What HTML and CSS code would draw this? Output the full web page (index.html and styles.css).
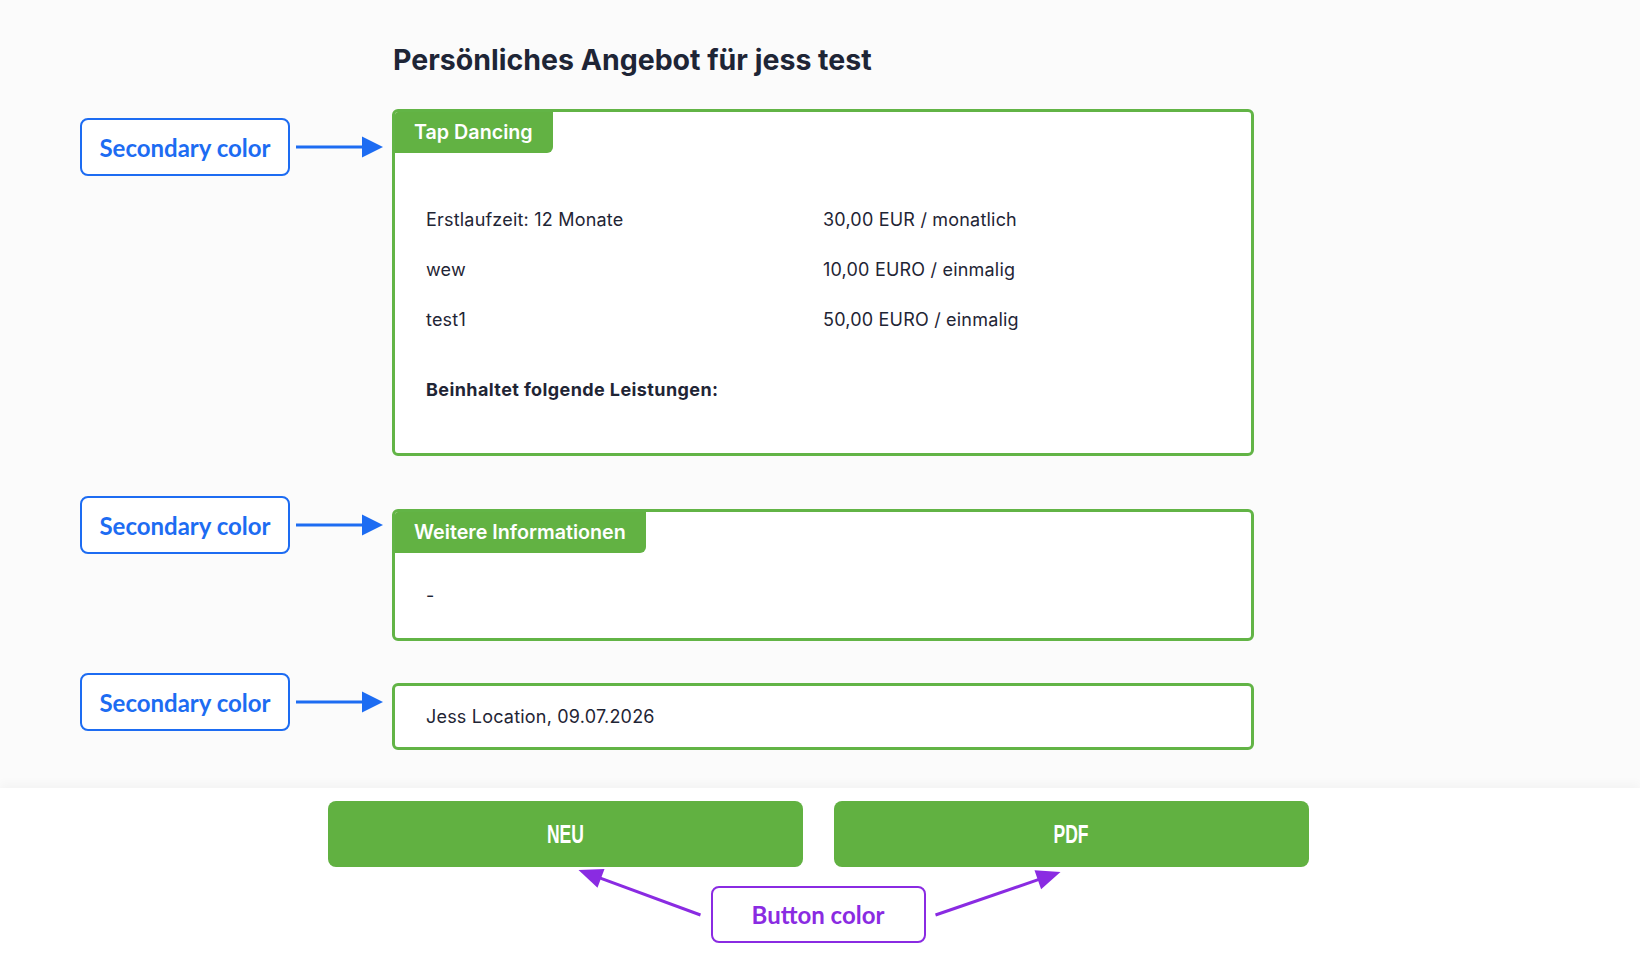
FILE: index.html
```html
<!DOCTYPE html>
<html lang="de">
<head>
    <meta charset="UTF-8">
    <meta name="viewport" content="width=device-width, initial-scale=1.0">
    <title>Persönliches Angebot</title>
    <link rel="stylesheet" href="styles.css">
</head>
<body>
    <main class="page">
        <h1 class="page-title">Persönliches Angebot für jess test</h1>

        <section class="row row-offer">
            <div class="note-col note-col-first">
                <div class="note">Secondary color</div>
                <svg class="arrow" width="87" height="22" viewBox="0 0 87 22">
                    <line x1="0" y1="11" x2="68" y2="11" stroke="#1d6cf2" stroke-width="3"/>
                    <polygon points="66,0.5 87,11 66,21.5" fill="#1d6cf2"/>
                </svg>
            </div>
            <div class="card card-offer">
                <div class="card-tab">Tap Dancing</div>
                <div class="card-body">
                    <div class="price-grid">
                        <span>Erstlaufzeit: 12 Monate</span><span>30,00 EUR / monatlich</span>
                        <span>wew</span><span>10,00 EURO / einmalig</span>
                        <span>test1</span><span>50,00 EURO / einmalig</span>
                    </div>
                    <p class="services">Beinhaltet folgende Leistungen:</p>
                </div>
            </div>
        </section>

        <section class="row row-info">
            <div class="note-col note-col-up">
                <div class="note">Secondary color</div>
                <svg class="arrow" width="87" height="22" viewBox="0 0 87 22">
                    <line x1="0" y1="11" x2="68" y2="11" stroke="#1d6cf2" stroke-width="3"/>
                    <polygon points="66,0.5 87,11 66,21.5" fill="#1d6cf2"/>
                </svg>
            </div>
            <div class="card">
                <div class="card-tab">Weitere Informationen</div>
                <div class="card-body card-body-info">-</div>
            </div>
        </section>

        <section class="row row-place">
            <div class="note-col note-col-up-small">
                <div class="note">Secondary color</div>
                <svg class="arrow" width="87" height="22" viewBox="0 0 87 22">
                    <line x1="0" y1="11" x2="68" y2="11" stroke="#1d6cf2" stroke-width="3"/>
                    <polygon points="66,0.5 87,11 66,21.5" fill="#1d6cf2"/>
                </svg>
            </div>
            <div class="card">
                <div class="card-body card-body-place">Jess Location, 09.07.2026</div>
            </div>
        </section>
    </main>

    <footer class="actions">
        <div class="button-row">
            <a href="#" class="btn"><span>NEU</span></a>
            <a href="#" class="btn"><span>PDF</span></a>
        </div>
        <div class="button-note">
            <svg width="130" height="50" viewBox="0 0 130 50">
                <line x1="127.5" y1="48" x2="26" y2="10.6" stroke="#8a2be2" stroke-width="3"/>
                <polygon points="5.5,3 24.5,20.7 31.5,1.9" fill="#8a2be2"/>
            </svg>
            <div class="note note-purple">Button color</div>
            <svg width="130" height="50" viewBox="0 0 130 50">
                <line x1="1.5" y1="48" x2="105" y2="12.4" stroke="#8a2be2" stroke-width="3"/>
                <polygon points="126.5,5 107.1,22.3 100.5,3.3" fill="#8a2be2"/>
            </svg>
        </div>
    </footer>
</body>
</html>
```

FILE: styles.css
```css
body {
    margin: 0;
    font-family: Inter, "Noto Sans", sans-serif;
    color: #1f2535;
    background-color: #fbfbfb;
}
.page {
    padding: 43px 0 38px 80px;
}
.page-title {
    margin: 0 0 32px 313px;
    font-size: 28.5px;
    line-height: 34px;
    font-weight: 700;
    color: #1e2536;
}
.row {
    display: flex;
    align-items: flex-start;
}
.row-info {
    margin-top: 53px;
}
.row-place {
    margin-top: 42px;
}
.note-col {
    display: flex;
    align-items: center;
    gap: 6px;
    width: 312px;
    flex-shrink: 0;
}
.note-col-first {
    margin-top: 9px;
}
.note-col-up {
    margin-top: -13px;
}
.note-col-up-small {
    margin-top: -10px;
}
.note {
    box-sizing: border-box;
    width: 210px;
    height: 58px;
    border: 2px solid #1d6cf2;
    border-radius: 8px;
    background-color: #fff;
    color: #1d6cf2;
    font-family: Lato, "Open Sans", sans-serif;
    font-weight: 700;
    font-size: 24px;
    display: flex;
    align-items: center;
    justify-content: center;
}
.arrow {
    display: block;
}
.card {
    box-sizing: border-box;
    width: 862px;
    border: 3px solid #62b446;
    border-radius: 6px;
    background-color: #fff;
    overflow: hidden;
}
.card-offer {
    height: 347px;
}
.card-tab {
    display: inline-block;
    height: 41px;
    line-height: 41px;
    padding: 0 20px 0 19px;
    background-color: #62b243;
    color: #fff;
    font-size: 19.7px;
    font-weight: 600;
    border-bottom-right-radius: 6px;
}
.card-body {
    padding: 55px 31px 0;
    font-size: 18px;
    line-height: 24px;
    letter-spacing: 0.2px;
}
.price-grid {
    display: grid;
    grid-template-columns: 397px 1fr;
    row-gap: 26px;
}
.services {
    margin: 46px 0 0;
    font-weight: 700;
    letter-spacing: 0.4px;
}
.card-body-info {
    padding: 31px 31px 30px;
}
.card-body-place {
    padding: 19px 31px 18px;
}
.actions {
    background-color: #fff;
    box-shadow: 0 -4px 10px rgba(0, 0, 0, 0.035);
    padding: 13px 4px 0 0;
    height: 159px;
}
.button-row {
    display: flex;
    justify-content: center;
    gap: 31px;
}
.btn {
    width: 475px;
    height: 66px;
    border-radius: 8px;
    background-color: #61b141;
    color: #fff;
    text-decoration: none;
    display: flex;
    align-items: center;
    justify-content: center;
    font-family: "Liberation Sans", Arial, sans-serif;
    font-weight: 700;
    font-size: 25px;
}
.btn span {
    display: inline-block;
    transform: scaleX(0.7);
}
.button-note {
    display: flex;
    justify-content: center;
    align-items: flex-start;
    gap: 8px;
}
.button-note svg {
    display: block;
}
.note-purple {
    width: 215px;
    height: 57px;
    margin-top: 19px;
    border-color: #8a2be2;
    color: #8a2be2;
}
```
